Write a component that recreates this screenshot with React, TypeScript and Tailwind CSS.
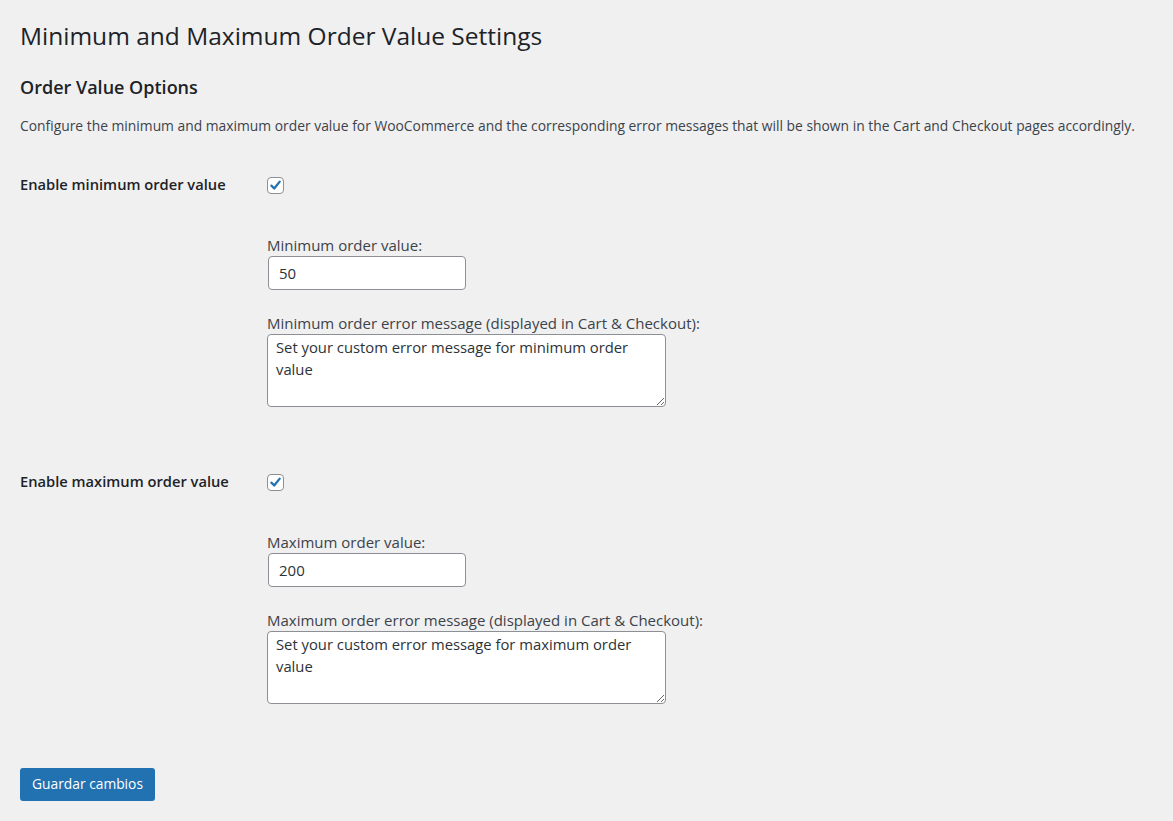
import { useState } from 'react';

const font = { fontFamily: '"Open Sans", "Noto Sans", sans-serif' };

function Check({ checked, onChange }: { checked: boolean; onChange: () => void }) {
  return (
    <button
      type="button"
      onClick={onChange}
      className="mt-[3px] flex h-[17px] w-[17px] items-center justify-center rounded-[4px] border border-[#8c8f94] bg-white"
    >
      {checked && (
        <svg viewBox="0 0 20 20" className="h-[17px] w-[17px]">
          <path d="M4.5 10.2 L8.3 14 L15.6 4.8" fill="none" stroke="#2271b1" strokeWidth="3" strokeLinecap="round" strokeLinejoin="round" />
        </svg>
      )}
    </button>
  );
}

function OrderRow({ kind, value, message }: { kind: string; value: string; message: string }) {
  const [on, setOn] = useState(true);
  const [val, setVal] = useState(value);
  const [msg, setMsg] = useState(message);
  const cap = kind[0].toUpperCase() + kind.slice(1);

  return (
    <div className="flex items-start">
      <div className="w-[247px] shrink-0 text-[14.7px] leading-5 font-semibold text-[#1d2327]">
        Enable {kind} order value
      </div>
      <div className="flex flex-col items-start">
        <Check checked={on} onChange={() => setOn(!on)} />

        <label className="mt-[41px] text-[15px] leading-5 text-[#3c434a]">{cap} order value:</label>
        <input
          value={val}
          onChange={(e) => setVal(e.target.value)}
          className="mt-[1px] ml-[1px] h-[34px] w-[198px] rounded-[4px] border border-[#8c8f94] bg-white px-[10px] text-[15px] text-[#2c3338] outline-none"
        />

        <label className="mt-[23px] text-[15px] leading-5 text-[#3c434a]">
          {cap} order error message (displayed in Cart &amp; Checkout):
        </label>
        <textarea
          value={msg}
          onChange={(e) => setMsg(e.target.value)}
          className="mt-[1px] h-[73px] w-[399px] rounded-[4px] border border-[#8c8f94] bg-white px-2 pt-[1px] pb-[2px] text-[14.8px] leading-[22px] text-[#2c3338] outline-none"
        />
      </div>
    </div>
  );
}

export default function App() {
  return (
    <div className="min-h-screen bg-[#f0f0f1] px-5 pt-5" style={font}>
      <h1 className="text-[24.5px] leading-8 font-normal text-[#1d2327]">
        Minimum and Maximum Order Value Settings
      </h1>

      <h2 className="mt-[23px] text-[18px] leading-6 font-semibold text-[#1d2327]">Order Value Options</h2>

      <p className="mt-[17px] text-[13.85px] leading-5 text-[#3c434a]">
        Configure the minimum and maximum order value for WooCommerce and the corresponding error messages that will be shown in the Cart and Checkout pages accordingly.
      </p>

      <div className="mt-[38px]">
        <OrderRow kind="minimum" value="50" message="Set your custom error message for minimum order value" />
      </div>
      <div className="mt-[64px]">
        <OrderRow kind="maximum" value="200" message="Set your custom error message for maximum order value" />
      </div>

      <button
        type="button"
        className="mt-[64px] h-[33px] rounded-[3px] bg-[#2271b1] px-3 text-[13.8px] text-white"
      >
        Guardar cambios
      </button>
    </div>
  );
}
